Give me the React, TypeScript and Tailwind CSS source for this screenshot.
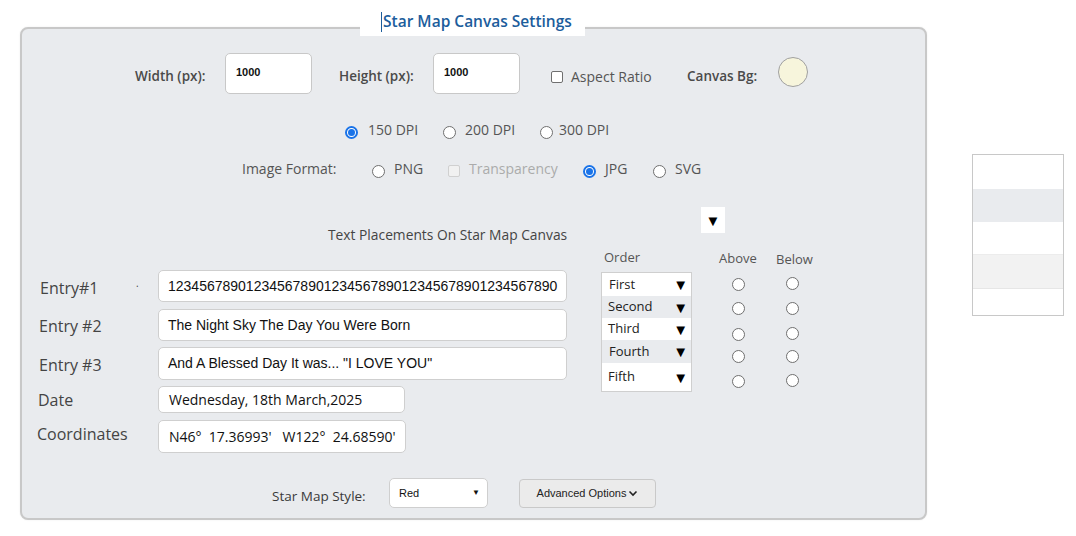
import React from 'react';

const FONT = { fontFamily: '"Open Sans", "Noto Sans", sans-serif' };
const ARIAL = { fontFamily: '"Liberation Sans", Arial, sans-serif' };

function Radio({ checked = false }: { checked?: boolean }) {
  return checked ? (
    <span className="inline-flex w-[13px] h-[13px] shrink-0 items-center justify-center rounded-full border-2 border-[#1a73e8] bg-white">
      <span className="w-[7px] h-[7px] rounded-full bg-[#1a73e8]" />
    </span>
  ) : (
    <span className="inline-block w-[13px] h-[13px] shrink-0 rounded-full border border-[#6f6f6f] bg-white" />
  );
}

function Check({ disabled = false }: { disabled?: boolean }) {
  return (
    <span
      className={`inline-block w-[12px] h-[12px] shrink-0 rounded-[2px] border ${
        disabled ? 'border-[#d0d0d0] bg-[#f1f1f1]' : 'border-[#6f6f6f] bg-white'
      }`}
    />
  );
}

const ORDERS = [
  { label: 'First', h: 'h-[23px]', bg: 'bg-white', pl: 'pl-[7px]' },
  { label: 'Second', h: 'h-[22px]', bg: 'bg-[#e9ebee]', pl: 'pl-[6px]' },
  { label: 'Third', h: 'h-[22px]', bg: 'bg-white', pl: 'pl-[6px]' },
  { label: 'Fourth', h: 'h-[23px]', bg: 'bg-[#e9ebee]', pl: 'pl-[7px]' },
  { label: 'Fifth', h: 'h-[28px]', bg: 'bg-white', pl: 'pl-[6px]' },
];

// top offsets of the above/below radios, so they line up with the order rows
const ABOVE_GAPS = ['mt-[12px]', 'mt-[11px]', 'mt-[13px]', 'mt-[9px]', 'mt-[12px]'];
const BELOW_GAPS = ['mt-[10px]', 'mt-[12px]', 'mt-[12px]', 'mt-[10px]', 'mt-[11px]'];

export default function App() {
  return (
    <div className="w-[1076px] h-[536px] bg-white overflow-hidden text-[#444]" style={FONT}>
      <div className="flex items-start">
        {/* Settings panel */}
        <div className="relative ml-[20px] mt-[27px] w-[907px] h-[493px] shrink-0 rounded-[8px] border-2 border-[#c8c8c8] bg-[#e9ebee] shadow-[0_0_2px_rgba(0,0,0,0.08)]">
          <div className="absolute left-[338px] top-[-21px] h-[28px] w-[225px] bg-white flex items-center pl-[21px]">
            <span className="w-[1px] h-[20px] bg-[#1c5d9c] mr-[1px]" />
            <span className="text-[15.5px] font-semibold text-[#1c5d9c] leading-none">Star Map Canvas Settings</span>
          </div>

          {/* Size row */}
          <div className="flex items-center h-[41px] mt-[24px] pl-[113px]">
            <span className="w-[70px] pt-[5px] text-[13.5px] font-semibold text-[#4a4a4a] whitespace-nowrap">Width (px):</span>
            <div className="ml-[20px] w-[87px] h-[41px] rounded-[5px] border border-[#c8c8c8] bg-white flex items-center pl-[10px] pb-[2px] text-[11px] font-bold text-[#111]" style={ARIAL}>1000</div>
            <span className="ml-[27px] w-[74px] pt-[5px] text-[13.5px] font-semibold text-[#4a4a4a] whitespace-nowrap">Height (px):</span>
            <div className="ml-[20px] w-[87px] h-[41px] rounded-[5px] border border-[#c8c8c8] bg-white flex items-center pl-[10px] pb-[2px] text-[11px] font-bold text-[#111]" style={ARIAL}>1000</div>
            <span className="ml-[31px] mt-[6px] flex"><Check /></span>
            <span className="ml-[8px] w-[81px] pt-[5px] text-[14px] text-[#555] whitespace-nowrap">Aspect Ratio</span>
            <span className="ml-[35px] w-[71px] pt-[5px] text-[13.5px] font-semibold text-[#4a4a4a] whitespace-nowrap">Canvas Bg:</span>
            <span className="ml-[20px] mt-[-3px] w-[30px] h-[30px] rounded-full border border-[#a0a0a0] bg-[#f7f5dc]" />
          </div>

          {/* DPI row */}
          <div className="flex items-center h-[20px] mt-[25px] pl-[323px] text-[14px] text-[#555]">
            <span className="mt-[7px] flex"><Radio checked /></span>
            <span className="ml-[10px] w-[50px] whitespace-nowrap">150 DPI</span>
            <span className="ml-[25px] mt-[7px] flex"><Radio /></span>
            <span className="ml-[9px] w-[50px] whitespace-nowrap">200 DPI</span>
            <span className="ml-[25px] mt-[7px] flex"><Radio /></span>
            <span className="ml-[6px] w-[53px] whitespace-nowrap">300 DPI</span>
          </div>

          {/* Format row */}
          <div className="flex items-center h-[20px] mt-[21px] pl-[220px] text-[14px] text-[#555]">
            <span className="w-[94px] pb-[3px] whitespace-nowrap">Image Format:</span>
            <span className="ml-[36px] mt-[3px] flex"><Radio /></span>
            <span className="ml-[9px] w-[30px] pb-[3px]">PNG</span>
            <span className="ml-[24px] mt-[1px] flex"><Check disabled /></span>
            <span className="ml-[9px] w-[89px] pb-[3px] text-[#ababab] whitespace-nowrap">Transparency</span>
            <span className="ml-[25px] mt-[3px] flex"><Radio checked /></span>
            <span className="ml-[9px] w-[23px] pb-[3px]">JPG</span>
            <span className="ml-[25px] mt-[3px] flex"><Radio /></span>
            <span className="ml-[9px] w-[27px] pb-[3px]">SVG</span>
          </div>

          {/* Heading + toggle */}
          <div className="flex items-start mt-[27px] pl-[306px]">
            <span className="mt-[21px] w-[240px] text-[13.8px] leading-[14px] text-[#444] whitespace-nowrap">Text Placements On Star Map Canvas</span>
            <div className="ml-[133px] w-[24px] h-[26px] bg-white flex items-center justify-center text-[15px] text-black leading-none">▼</div>
          </div>

          {/* Entries */}
          <div className="flex items-start mt-[6px]">
            <div className="flex flex-col pt-[22px] pl-[15px]">
              <div className="flex items-center h-[32px]">
                <span className="w-[121px] pl-[3px] pt-[4px] text-[16px] text-[#444] relative">
                  Entry#1
                  <span className="absolute left-[99px] top-[4px] text-[10px]">.</span>
                </span>
                <div className="w-[409px] h-[32px] rounded-[5px] border border-[#cfcfcf] bg-white flex items-center pl-[9px] text-[14px] text-[#111]" style={ARIAL}>
                  12345678901234567890123456789012345678901234567890
                </div>
              </div>
              <div className="flex items-center h-[32px] mt-[7px]">
                <span className="w-[121px] pl-[2px] pt-[1px] text-[16px] text-[#444]">Entry #2</span>
                <div className="w-[409px] h-[32px] rounded-[5px] border border-[#cfcfcf] bg-white flex items-center pl-[9px] text-[14px] text-[#111]" style={ARIAL}>
                  The Night Sky The Day You Were Born
                </div>
              </div>
              <div className="flex items-center h-[33px] mt-[6px]">
                <span className="w-[121px] pl-[2px] pt-[3px] text-[16px] text-[#444]">Entry #3</span>
                <div className="w-[409px] h-[33px] rounded-[5px] border border-[#cfcfcf] bg-white flex items-center pl-[9px] text-[14px] text-[#111]" style={ARIAL}>
                  And A Blessed Day It was... "I LOVE YOU"
                </div>
              </div>
              <div className="flex items-center h-[27px] mt-[6px]">
                <span className="w-[121px] pl-[1px] pt-[1px] text-[16px] text-[#444]">Date</span>
                <div className="w-[247px] h-[27px] rounded-[5px] border border-[#cfcfcf] bg-white flex items-center pl-[10px] text-[14px] text-[#111]">
                  Wednesday, 18th March,2025
                </div>
              </div>
              <div className="flex items-center h-[33px] mt-[7px]">
                <span className="w-[121px] pb-[6px] text-[16px] text-[#444]">Coordinates</span>
                <div className="w-[248px] h-[33px] rounded-[5px] border border-[#cfcfcf] bg-white flex items-center pl-[10px] text-[14px] text-[#111] whitespace-pre">
                  {"N46°  17.36993'   W122°  24.68590'"}
                </div>
              </div>
            </div>

            {/* Order */}
            <div className="ml-[34px] flex flex-col">
              <span className="mt-[1px] pl-[3px] h-[16px] text-[13px] leading-[16px] text-[#555]">Order</span>
              <div className="mt-[7px] w-[91px] border border-[#cfcfcf] bg-white flex flex-col">
                {ORDERS.map((o) => (
                  <div key={o.label} className={`flex items-center justify-between ${o.h} ${o.bg} ${o.pl} pr-[3px] text-[13px] text-[#222]`}>
                    <span>{o.label}</span>
                    <span className="text-[15px] text-black leading-none">▼</span>
                  </div>
                ))}
              </div>
            </div>

            {/* Above */}
            <div className="ml-[26px] w-[40px] flex flex-col items-center">
              <span className="mt-[2px] h-[16px] text-[13px] leading-[16px] text-[#555]">Above</span>
              {ABOVE_GAPS.map((g, i) => (
                <span key={i} className={`flex h-[13px] ${g}`}><Radio /></span>
              ))}
            </div>

            {/* Below */}
            <div className="ml-[14px] w-[40px] flex flex-col items-center">
              <span className="mt-[3px] pl-[5px] h-[16px] text-[13px] leading-[16px] text-[#555]">Below</span>
              {BELOW_GAPS.map((g, i) => (
                <span key={i} className={`flex h-[13px] ${g}`}><Radio /></span>
              ))}
            </div>
          </div>

          {/* Style row */}
          <div className="flex items-center h-[30px] mt-[25px] pl-[250px]">
            <span className="w-[97px] pt-[6px] text-[13.5px] font-medium text-[#3a3a3a] whitespace-nowrap">Star Map Style:</span>
            <div className="ml-[20px] w-[99px] h-[30px] rounded-[5px] border border-[#cfcfcf] bg-white flex items-center justify-between pl-[9px] pr-[7px] text-[11px] text-[#111]" style={ARIAL}>
              <span>Red</span>
              <span className="text-[8px] leading-none">▼</span>
            </div>
            <div className="ml-[31px] w-[137px] h-[29px] rounded-[4px] border border-[#c9c9c9] bg-[#ebebeb] flex items-center justify-center gap-[2px] text-[11px] text-[#222]" style={ARIAL}>
              <span>Advanced Options</span>
              <svg width="10" height="10" viewBox="0 0 10 10" fill="none" stroke="#222" strokeWidth="1.6">
                <path d="M1.5 3.5 L5 7 L8.5 3.5" />
              </svg>
            </div>
          </div>
        </div>

        {/* Side table */}
        <div className="ml-[45px] mt-[154px] w-[92px] border border-[#c8c8c8] bg-white flex flex-col">
          <div className="h-[34px] bg-white" />
          <div className="h-[33px] bg-[#e9ebee]" />
          <div className="h-[33px] bg-white border-b border-[#ececec]" />
          <div className="h-[34px] bg-[#f2f2f2] border-b border-[#e6e6e6]" />
          <div className="h-[26px] bg-white" />
        </div>
      </div>
    </div>
  );
}
